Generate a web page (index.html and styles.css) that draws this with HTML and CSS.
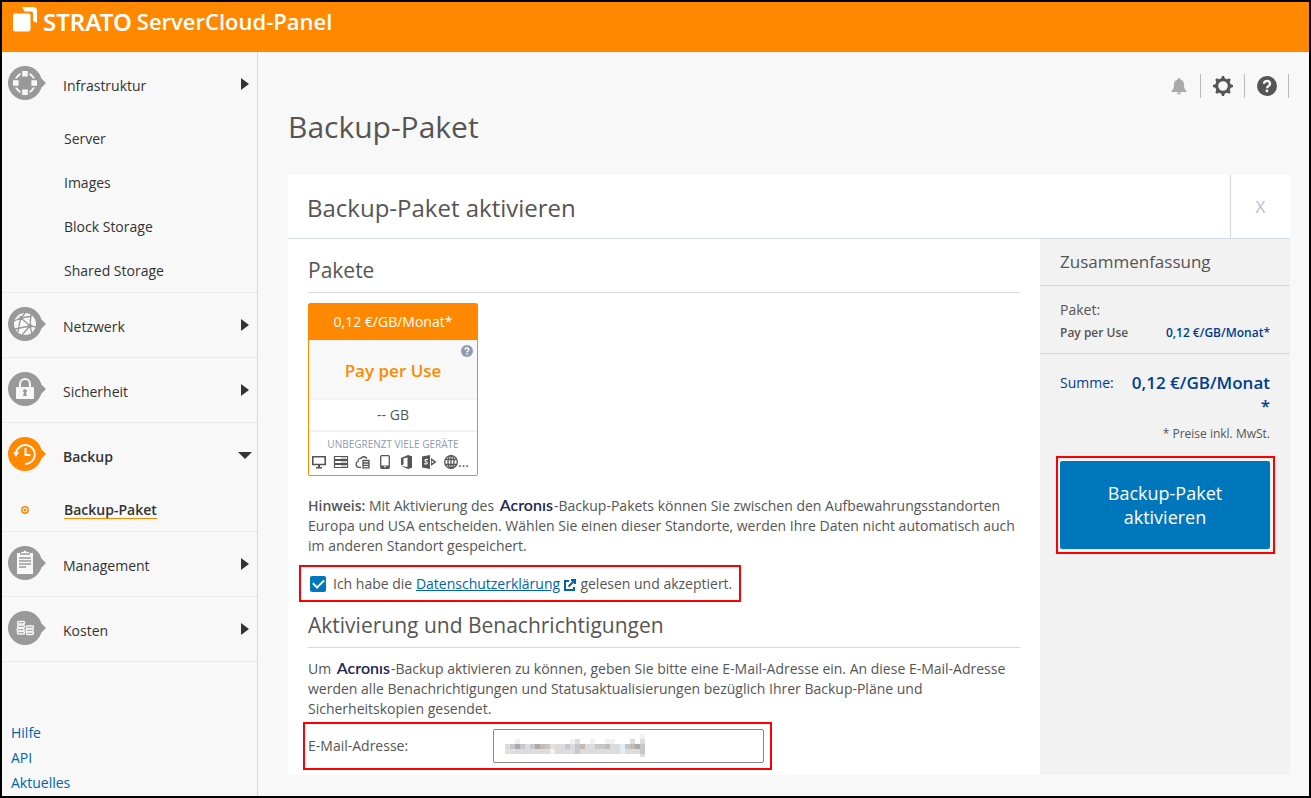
FILE: index.html
```html
<!DOCTYPE html>
<html lang="de">
<head>
    <meta charset="UTF-8">
    <meta name="viewport" content="width=device-width, initial-scale=1.0">
    <title>STRATO ServerCloud-Panel</title>
    <link rel="stylesheet" href="styles.css">
</head>
<body>
    <header class="topbar">
        <svg class="logo-mark" width="26" height="26" viewBox="0 0 26 26" fill="#fff">
            <rect x="1" y="6.500" width="17.500" height="18" rx="2"/>
            <path d="M10 0h11a4 4 0 0 1 4 4v12l-4-2V6.500a2 2 0 0 0-2-2h-6.500z"/>
        </svg>
        <span class="brand">STRATO</span>
        <span class="product">ServerCloud-Panel</span>
    </header>

    <div class="layout">
        <aside class="sidebar">
            <nav>
                <div class="section">
                    <a class="section-head" href="#">
                        <svg class="nav-icon" width="38" height="34" viewBox="0 0 38 34">
                            <path class="disc" d="M17 0a17 17 0 1 1 0 34a17 17 0 0 1 0-34zM33 12l5 5-5 5z"/>
                            <circle cx="17" cy="17" r="10" fill="none" stroke="#f8f8f8" stroke-width="1.800"/>
                            <path fill="#999" d="M12.500 5h9v7h-9zM12.500 22h9v7h-9zM5 12.500h7v9H5zM22 12.500h7v9h-7z"/>
                            <path fill="#f8f8f8" d="M14.200 5h5.600v5.600h-5.600zM14.200 23.400h5.600V29h-5.600zM5 14.200h5.600v5.600H5zM23.400 14.200H29v5.600h-5.600z"/>
                        </svg>
                        <span>Infrastruktur</span>
                        <i class="arrow"></i>
                    </a>
                    <a class="sub" href="#">Server</a>
                    <a class="sub" href="#">Images</a>
                    <a class="sub" href="#">Block Storage</a>
                    <a class="sub" href="#">Shared Storage</a>
                </div>
                <div class="section">
                    <a class="section-head" href="#">
                        <svg class="nav-icon" width="38" height="34" viewBox="0 0 38 34">
                            <path class="disc" d="M17 0a17 17 0 1 1 0 34a17 17 0 0 1 0-34zM33 12l5 5-5 5z"/>
                            <circle cx="17" cy="17" r="11" fill="#f8f8f8"/>
                            <g fill="none" stroke="#999" stroke-width="1.300">
                                <path d="M6 14l7-3 9 8 6 1M13 11l4-5M13 11l11-2M13 11c-2 5-2 9-3 14M22 19l1-12M22 19l-8 9M22 19l2 8M7 22l15-3"/>
                            </g>
                            <g fill="#999"><circle cx="13" cy="11" r="2"/><circle cx="22" cy="19" r="2"/></g>
                        </svg>
                        <span>Netzwerk</span>
                        <i class="arrow"></i>
                    </a>
                </div>
                <div class="section">
                    <a class="section-head" href="#">
                        <svg class="nav-icon" width="38" height="34" viewBox="0 0 38 34">
                            <path class="disc" d="M17 0a17 17 0 1 1 0 34a17 17 0 0 1 0-34zM33 12l5 5-5 5z"/>
                            <path d="M12 16v-4a5 5 0 0 1 10 0v4" fill="none" stroke="#f8f8f8" stroke-width="2"/>
                            <rect x="8" y="15" width="18" height="12" rx="1" fill="#f8f8f8"/>
                            <path d="M17 17a2 2 0 0 1 1 3.700l1 3.300h-4l1-3.300a2 2 0 0 1 1-3.700z" fill="#999"/>
                        </svg>
                        <span>Sicherheit</span>
                        <i class="arrow"></i>
                    </a>
                </div>
                <div class="section open">
                    <a class="section-head" href="#">
                        <svg class="nav-icon" width="38" height="34" viewBox="0 0 38 34">
                            <path class="disc" d="M17 0a17 17 0 1 1 0 34a17 17 0 0 1 0-34zM33 12l5 5-5 5z"/>
                            <path d="M8 16a9.500 9.500 0 1 1 9 11M17.500 11v7h5" fill="none" stroke="#f8f8f8" stroke-width="2"/>
                            <path d="M5 15h6l-3 5z" fill="#f8f8f8"/>
                        </svg>
                        <span>Backup</span>
                        <i class="arrow"></i>
                    </a>
                    <a class="sub current" href="#">
                        <svg class="bullet" width="8" height="8" viewBox="0 0 8 8">
                            <circle cx="4" cy="4" r="3.200" fill="none" stroke="#ff8800" stroke-width="1.500"/>
                            <circle cx="4" cy="4" r="1.300" fill="#ff8800"/>
                        </svg>
                        <span>Backup-Paket</span>
                    </a>
                </div>
                <div class="section">
                    <a class="section-head" href="#">
                        <svg class="nav-icon" width="38" height="34" viewBox="0 0 38 34">
                            <path class="disc" d="M17 0a17 17 0 1 1 0 34a17 17 0 0 1 0-34zM33 12l5 5-5 5z"/>
                            <path d="M9 7h16v21H9z" fill="#f8f8f8"/>
                            <path d="M12 8h10M11 12h12M11 15h12M11 18h12M11 21h7" stroke="#999" stroke-width="1.300"/>
                            <path d="M13 7V6h2.500a1.500 1.500 0 0 1 3 0H21v1z" fill="#f8f8f8"/>
                        </svg>
                        <span>Management</span>
                        <i class="arrow"></i>
                    </a>
                </div>
                <div class="section">
                    <a class="section-head" href="#">
                        <svg class="nav-icon" width="38" height="34" viewBox="0 0 38 34">
                            <path class="disc" d="M17 0a17 17 0 1 1 0 34a17 17 0 0 1 0-34zM33 12l5 5-5 5z"/>
                            <g fill="#999" stroke="#f8f8f8" stroke-width="1.300">
                                <rect x="9.500" y="20.500" width="7" height="2.500" rx="1"/><rect x="9" y="17.500" width="7" height="2.500" rx="1"/><rect x="9.500" y="14" width="7" height="2.500" rx="1"/><rect x="9.500" y="10.500" width="7" height="2.500" rx="1"/>
                                <rect x="18.500" y="21" width="7" height="2.500" rx="1"/><rect x="18" y="18" width="7" height="2.500" rx="1"/><rect x="18.500" y="15" width="7" height="2.500" rx="1"/>
                            </g>
                        </svg>
                        <span>Kosten</span>
                        <i class="arrow"></i>
                    </a>
                </div>
            </nav>
            <div class="links">
                <a href="#">Hilfe</a>
                <a href="#">API</a>
                <a href="#">Aktuelles</a>
            </div>
        </aside>

        <main class="content">
            <div class="tools">
                <button type="button" class="tool" aria-label="Meldungen">
                    <svg width="20" height="20" viewBox="0 0 20 20" fill="#aaa">
                        <path d="M10 2a1.300 1.300 0 0 1 1.300 1.400C14 4 15 6 15 8.500c0 4 1 5 2.500 6.500v1h-15v-1C4 13.500 5 12.500 5 8.500 5 6 6 4 8.700 3.400A1.300 1.300 0 0 1 10 2zM8 16.500h4a2 2 0 0 1-4 0z"/>
                    </svg>
                </button>
                <button type="button" class="tool" aria-label="Einstellungen">
                    <svg width="22" height="22" viewBox="0 0 22 22">
                        <circle cx="11" cy="11" r="6.300" fill="none" stroke="#555" stroke-width="3"/>
                        <path fill="#555" d="M9 4l1-3h2l1 3zM9 18l1 3h2l1-3zM4 9l-3 1v2l3 1zM18 9l3 1v2l-3 1zM4.600 7.500L3.300 4.700l1.400-1.400 2.800 1.300zM14.500 4.600l2.800-1.300 1.400 1.400-1.300 2.800zM17.400 14.500l1.300 2.800-1.400 1.400-2.800-1.300zM7.500 17.400l-2.800 1.300-1.400-1.400 1.300-2.800z"/>
                    </svg>
                </button>
                <button type="button" class="tool" aria-label="Hilfe">
                    <svg width="20" height="20" viewBox="0 0 20 20">
                        <circle cx="10" cy="10" r="10" fill="#555"/>
                        <path d="M7 7.700a3 2.700 0 1 1 4.800 2.100c-1.200.8-1.800 1.200-1.800 2.400" fill="none" stroke="#f8f8f8" stroke-width="2.400"/>
                        <rect x="8.700" y="13.600" width="2.500" height="2.500" fill="#f8f8f8"/>
                    </svg>
                </button>
            </div>
            <h1>Backup-Paket</h1>

            <form class="panel">
                <div class="panel-head">
                    <h2>Backup-Paket aktivieren</h2>
                    <button type="button" class="close">X</button>
                </div>
                <div class="panel-body">
                    <div class="settings">
                        <h3>Pakete</h3>
                        <div class="package">
                            <div class="package-price">0,12 €/GB/Monat*</div>
                            <div class="package-name">
                                Pay per Use
                                <svg class="hint" width="12" height="12" viewBox="0 0 20 20">
                                    <circle cx="10" cy="10" r="10" fill="#8f9bb0"/>
                                    <path d="M7 7.700a3 2.700 0 1 1 4.800 2.100c-1.200.8-1.800 1.200-1.800 2.400" fill="none" stroke="#fff" stroke-width="2.400"/>
                                    <rect x="8.700" y="13.600" width="2.500" height="2.500" fill="#fff"/>
                                </svg>
                            </div>
                            <div class="package-size">-- GB</div>
                            <div class="package-devices">
                                <span class="caption">UNBEGRENZT VIELE GERÄTE</span>
                                <div class="devices">
                                    <svg width="16" height="14" viewBox="0 0 16 14"><path d="M1.800 1.800h12.400v7.700H1.800z" fill="none" stroke="#555" stroke-width="1.600"/><path d="M7 10h2v2h2v1.500H5V12h2z" fill="#555"/></svg>
                                    <svg width="16" height="14" viewBox="0 0 16 14"><path d="M1.500 1.500h13v3h-13zM1.500 5.500h13v3h-13zM1.500 9.500h13v3h-13z" fill="none" stroke="#555" stroke-width="1.200"/><path d="M8 3h5M8 7h5M8 11h5" stroke="#999"/></svg>
                                    <svg width="16" height="14" viewBox="0 0 16 14" fill="none" stroke="#555" stroke-width="1.300"><path d="M6 12.300H4a3 3 0 0 1-1-5.800C3 4 4.500 3 6 3.500 7 1.500 10 .8 12 3.500"/><path d="M8 5.500h6v7.300H8zM8 8h6M8 10.400h6"/></svg>
                                    <svg width="16" height="14" viewBox="0 0 16 14"><rect x="3.700" y=".7" width="8.600" height="12.600" rx="1" fill="none" stroke="#555" stroke-width="1.300"/><path d="M4 10.500h8V13H4z" fill="#555"/><path d="M7 11.800h2" stroke="#fff"/></svg>
                                    <svg width="16" height="14" viewBox="0 0 16 14"><path d="M2 3l7-3 4 1.200v11.600L9 14l-7-3 6.500 1V2.500L4.500 3.500v6L2 10.500z" fill="#555"/></svg>
                                    <svg width="16" height="14" viewBox="0 0 16 14"><path d="M1 1.500L9 0v14l-8-1.500zM10 3l5.500 4L10 11z" fill="#555"/><path d="M7 4.800C4.500 3.600 3 5.500 5 6.700s2 3-1.800 1.900" fill="none" stroke="#fff" stroke-width="1.200"/><circle cx="11.500" cy="7" r="1" fill="#fff"/></svg>
                                    <svg width="16" height="14" viewBox="0 0 16 14" fill="none" stroke="#555" stroke-width="1.300"><circle cx="8" cy="7" r="6.300"/><ellipse cx="8" cy="7" rx="3" ry="6.300"/><path d="M8 .7v12.600M2.500 4.500h11M2.500 9.500h11"/></svg>
                                    <span>...</span>
                                </div>
                            </div>
                        </div>

                        <p><strong>Hinweis:</strong> Mit Aktivierung des <span class="acronis">Acronıs</span>-Backup-Pakets können Sie zwischen den Aufbewahrungsstandorten Europa und USA entscheiden. Wählen Sie einen dieser Standorte, werden Ihre Daten nicht automatisch auch im anderen Standort gespeichert.</p>

                        <div class="marked consent">
                            <input type="checkbox" id="privacy" checked>
                            <label for="privacy">Ich habe die <a href="#">Datenschutzerklärung</a>
                                <svg width="12" height="12" viewBox="0 0 12 12" fill="none" stroke="#0063ad" stroke-width="2"><path d="M5 2H1v9h9V8M4.500 7.500L10 2M7 1h4v4"/></svg>
                                gelesen und akzeptiert.</label>
                        </div>

                        <h3>Aktivierung und Benachrichtigungen</h3>
                        <p>Um <span class="acronis">Acronıs</span>-Backup aktivieren zu können, geben Sie bitte eine E-Mail-Adresse ein. An diese E-Mail-Adresse werden alle Benachrichtigungen und Statusaktualisierungen bezüglich Ihrer Backup-Pläne und Sicherheitskopien gesendet.</p>

                        <div class="marked email">
                            <label for="email">E-Mail-Adresse:</label>
                            <div class="email-field">
                                <input type="email" id="email">
                                <!-- redacted address -->
                                <svg class="redacted" width="140" height="23" viewBox="0 0 140 23" shape-rendering="crispEdges">
                                    <path fill="#f1f1f1" d="M135 0h5v5h-5zM10 5h5v5h-5zM65 5h5v5h-5zM85 5h5v5h-5zM100 5h10v5h-10zM45 15h5v5h-5z"/>
                                    <path fill="#dcdcdc" d="M0 10h5v5H0zM20 10h10v5H20zM50 10h10v5H50zM70 5h5v5h-5zM125 5h5v5h-5zM135 5h5v5h-5zM65 10h5v5h-5zM80 10h10v5H80zM105 10h10v5h-10zM10 15h35v5H10zM50 15h20v5H50zM75 15h40v5H75zM120 15h15v5h-15zM135 20h5v3h-5z"/>
                                    <path fill="#c5c8ca" d="M5 10h5v5H5zM15 10h5v5h-5zM25 10h5v5h-5zM40 10h5v5h-5zM60 10h5v5h-5zM70 10h5v5h-5zM90 10h10v5H90zM120 10h5v5h-5zM135 10h5v10h-5zM70 15h5v5h-5z"/>
                                    <path fill="#aaa9ae" d="M10 10h5v5h-5zM30 10h5v5h-5zM130 10h5v5h-5z"/>
                                    <path fill="#c4b9b3" d="M35 10h5v5h-5zM75 10h5v5h-5zM100 10h5v5h-5zM125 10h5v5h-5z"/>
                                    <path fill="#e6e0da" d="M0 15h10v5H0zM45 10h5v5h-5z"/>
                                    <path fill="#e4eef7" d="M115 10h5v10h-5z"/>
                                </svg>
                            </div>
                        </div>
                    </div>

                    <div class="summary">
                        <h4>Zusammenfassung</h4>
                        <div class="summary-package">
                            <span class="summary-label">Paket:</span>
                            <div class="summary-row">
                                <span>Pay per Use</span>
                                <span class="blue">0,12 €/GB/Monat*</span>
                            </div>
                        </div>
                        <div class="summary-total blue">
                            <span>Summe:</span>
                            <strong>0,12 €/GB/Monat<br>*</strong>
                        </div>
                        <div class="vat">* Preise inkl. MwSt.</div>
                        <div class="marked action">
                            <button type="submit">Backup-Paket aktivieren</button>
                        </div>
                    </div>
                </div>
            </form>
        </main>
    </div>
</body>
</html>
```
FILE: styles.css
```css
* {
    box-sizing: border-box;
}
body {
    display: flex;
    flex-direction: column;
    min-height: 100vh;
    margin: 0;
    border: 2px solid #000;
    background-color: #f8f8f8;
    color: #555;
    font-family: "Open Sans", sans-serif;
    font-size: 14px;
    line-height: 20px;
}
h1, h2, h3, h4, p {
    margin: 0;
    font-weight: 400;
}
a {
    color: #0063ad;
}
button, input {
    font-family: inherit;
}
button {
    cursor: pointer;
}
strong {
    font-weight: 600;
}
svg {
    flex-shrink: 0;
}

/* Header */
.topbar {
    display: flex;
    align-items: flex-start;
    height: 50px;
    padding: 5px 10px;
    background-color: #ff8800;
    color: #fff;
}
.brand {
    margin: 2px 5px 0 5px;
    font-family: "Noto Sans", sans-serif;
    font-size: 24px;
    font-weight: 600;
    line-height: 26px;
}
.product {
    font-size: 22px;
    font-weight: 600;
    line-height: 28px;
}

/* Sidebar */
.layout {
    display: flex;
    flex: 1;
}
.sidebar {
    flex: 0 0 256px;
    border-right: 1px solid #d9d9d9;
}
.section {
    border-bottom: 1px dotted #ddd;
}
.section-head {
    display: flex;
    align-items: center;
    height: 64px;
    padding: 0 8px 0 6px;
    color: #333;
    text-decoration: none;
}
.section-head span {
    flex: 1;
    margin-left: 17px;
    padding-top: 4px;
}
.nav-icon {
    margin-bottom: 2px;
}
.nav-icon .disc {
    fill: #999;
}
.open .nav-icon .disc {
    fill: #ff8800;
}
.arrow {
    border: 6px solid transparent;
    border-left: 8px solid #333;
    border-right: 0;
}
.open .arrow {
    margin-right: -3px;
    border: 7px solid transparent;
    border-top: 7px solid #333;
    border-bottom: 0;
}
.sub {
    display: flex;
    align-items: center;
    height: 44px;
    padding-top: 2px;
    padding-left: 62px;
    color: #333;
    text-decoration: none;
}
.open .section-head, .current {
    font-weight: 600;
}
.current {
    padding-left: 19px;
}
.current span {
    margin-left: 35px;
    border-bottom: 1px solid #ff8800;
    line-height: 17px;
}
.links {
    display: flex;
    flex-direction: column;
    padding: 58px 9px 0;
    line-height: 25px;
}
.links a {
    text-decoration: none;
}

/* Content */
.content {
    flex: 1;
    padding: 22px 19px 20px 30px;
}
.tools {
    display: flex;
    justify-content: flex-end;
    height: 24px;
    padding-right: 1px;
}
.tool {
    display: flex;
    align-items: center;
    justify-content: center;
    width: 44px;
    padding: 0;
    border: 0;
    border-right: 1px solid #bbb;
    background: none;
}
h1 {
    padding: 8px 0 27px;
    font-size: 30px;
    line-height: 42px;
}
.panel-head {
    display: flex;
    height: 64px;
    border-bottom: 1px solid #d3dae3;
    border-radius: 3px 3px 0 0;
    background-color: #fff;
}
h2 {
    flex: 1;
    padding-left: 19px;
    font-size: 24px;
    line-height: 66px;
}
.close {
    width: 60px;
    border: 0;
    border-left: 1px solid #d3dae3;
    background: none;
    color: #b4becb;
    font-size: 17px;
}
.panel-body {
    display: flex;
    background-color: #fff;
}
.settings {
    flex: 1;
    padding: 14px 20px 5px;
}
h3 {
    padding-bottom: 5px;
    border-bottom: 1px solid #d9d9d9;
    font-size: 21px;
    line-height: 34px;
}

/* Package card */
.package {
    width: 170px;
    margin: 10px 0 20px;
    border: 1px solid #ff8800;
    border-radius: 2px;
    text-align: center;
}
.package-price {
    background-color: #ff8800;
    color: #fff;
    line-height: 36px;
}
.package-name {
    position: relative;
    padding-top: 3px;
    border-bottom: 2px solid #f3f3f3;
    background-color: #f8f8f8;
    color: #ff8800;
    font-size: 17px;
    font-weight: 600;
    line-height: 55px;
}
.hint {
    position: absolute;
    top: 5px;
    right: 4px;
}
.package-size {
    border-bottom: 2px solid #f3f3f3;
    line-height: 30px;
}
.caption {
    display: block;
    padding-top: 3px;
    color: #8f9bb0;
    font-size: 10px;
    line-height: 18px;
}
.devices {
    display: flex;
    align-items: center;
    gap: 6px;
    height: 22px;
    padding: 0 2px 5px;
}
.devices span {
    margin-left: -7px;
}

/* Form */
.acronis {
    display: inline-block;
    margin: 0 1px 0 2px;
    color: #1c2653;
    font-family: Lato, sans-serif;
    font-size: 16px;
    font-weight: 600;
    line-height: 16px;
}
.marked {
    border: 2px solid #f00;
}
.consent {
    display: flex;
    align-items: center;
    width: max-content;
    height: 37px;
    margin: 9px 0 6px -9px;
    padding: 0 7px 0 9px;
}
.consent input {
    display: grid;
    place-items: center;
    appearance: none;
    width: 16px;
    height: 16px;
    margin: 0 7px 0 0;
    border-radius: 2px;
    background-color: #0077bd;
}
.consent input::before {
    content: "";
    width: 9px;
    height: 5px;
    margin-bottom: 2px;
    border: solid #fff;
    border-width: 0 0 2px 2px;
    transform: rotate(-45deg);
}
.consent svg {
    margin-right: 1px;
    vertical-align: -2px;
}
h3 + p {
    padding-top: 11px;
}
.email {
    display: flex;
    align-items: center;
    width: 469px;
    height: 48px;
    margin: 3px 0 0 -5px;
    padding: 0 6px 0 3px;
}
.email label {
    width: 185px;
}
.email-field {
    position: relative;
    flex: 1;
}
.email input {
    display: block;
    width: 100%;
    height: 34px;
    padding: 0 12px;
    border: 1px solid #888;
    border-radius: 2px;
    color: #555;
    font-size: 14px;
}
.redacted {
    position: absolute;
    top: 5px;
    left: 12px;
    pointer-events: none;
}

/* Summary */
.summary {
    flex: 0 0 250px;
    background-color: #f2f2f2;
}
h4 {
    padding: 0 20px;
    border-bottom: 1px solid #d9d9d9;
    font-size: 17px;
    line-height: 46px;
}
.summary-package {
    padding: 14px 20px 10px;
    border-bottom: 1px solid #d9d9d9;
}
.summary-row {
    display: flex;
    justify-content: space-between;
    padding-top: 3px;
    font-size: 12px;
    font-weight: 600;
}
.blue {
    color: #003d8f;
}
.summary-total {
    display: flex;
    justify-content: space-between;
    padding: 17px 20px 0;
    line-height: 23px;
}
.summary-total strong {
    font-size: 17px;
    text-align: right;
}
.vat {
    padding: 7px 20px 0;
    font-size: 12px;
    text-align: right;
}
.action {
    margin: 12px 15px 0 16px;
    padding: 3px 3px 3px 2px;
}
.action button {
    width: 100%;
    height: 88px;
    padding: 0 30px;
    border: 0;
    border-radius: 2px;
    background-color: #0077bd;
    color: #fff;
    font-size: 18px;
    line-height: 24px;
}
```
